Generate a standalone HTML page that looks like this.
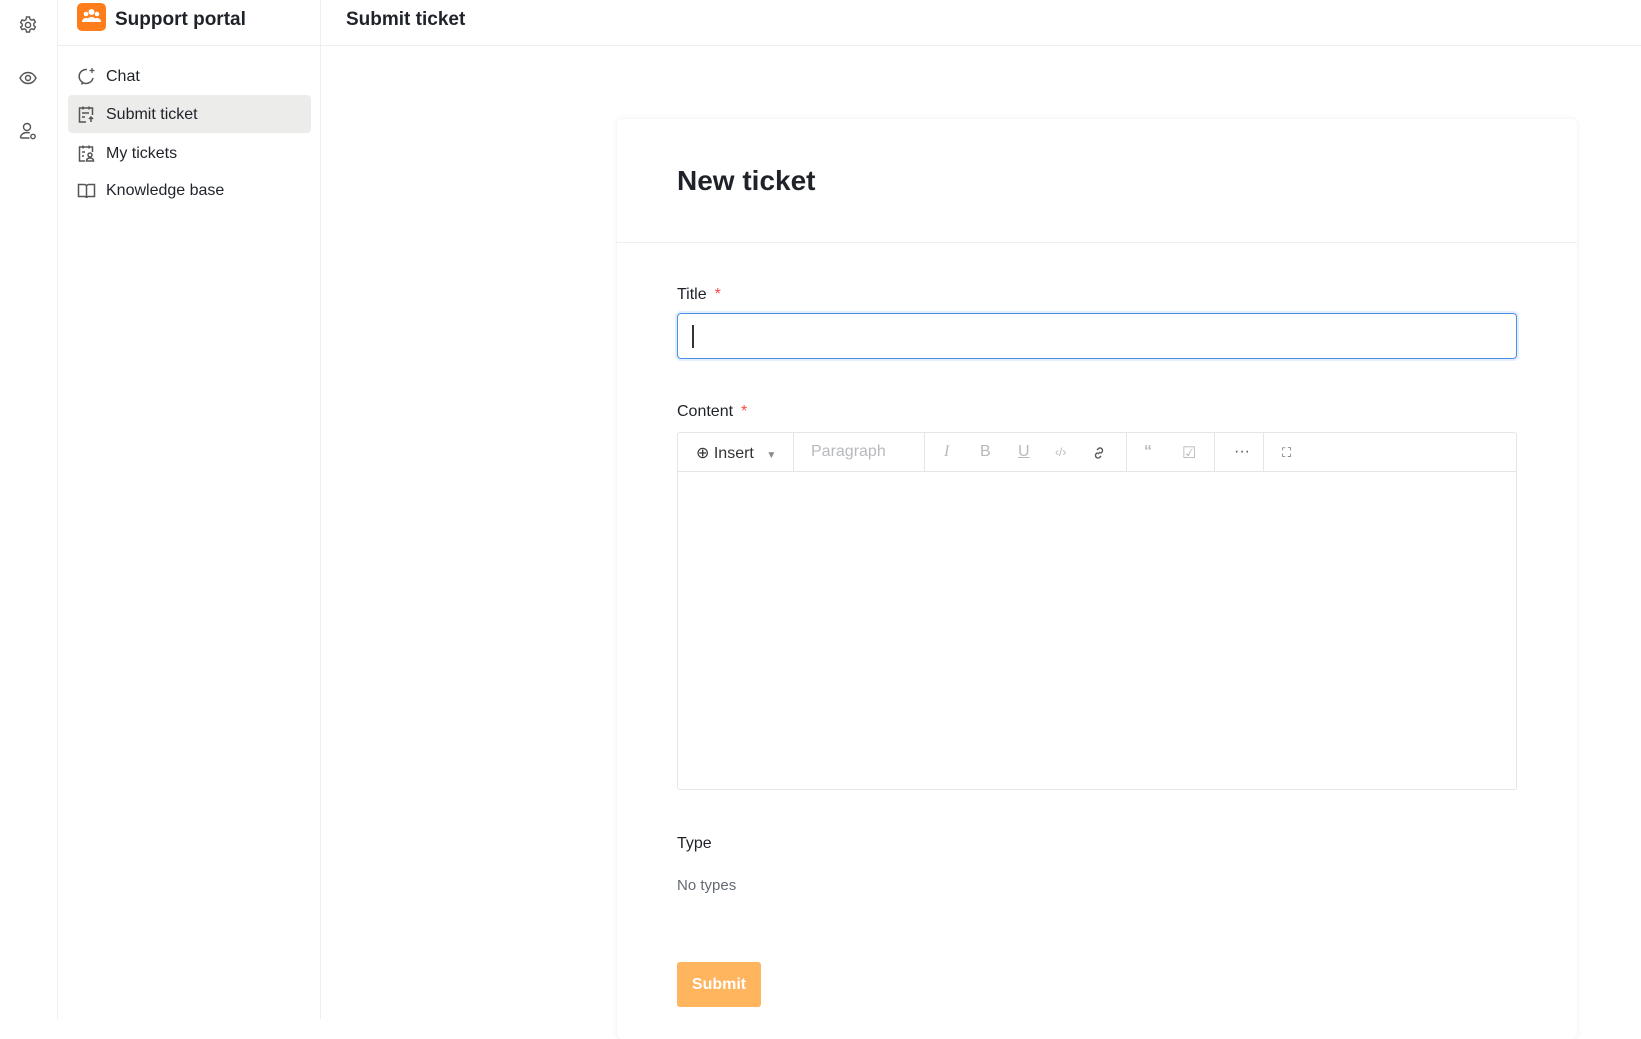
<!DOCTYPE html>
<html><head><meta charset="utf-8"><style>
*{box-sizing:border-box;margin:0;padding:0}
body{width:1641px;height:1019px;overflow:hidden;background:#fff;font-family:"Liberation Sans",sans-serif;color:#1f2329;position:relative}
.rail{position:absolute;left:0;top:0;width:58px;height:1019px;border-right:1px solid #eceef0;background:#fff}
.rail svg{position:absolute;left:18px}
.side{position:absolute;left:58px;top:0;width:263px;height:1019px;border-right:1px solid #eceef0}
.top{position:absolute;left:58px;top:0;right:0;height:46px;border-bottom:1px solid #eceef0}
.logo{position:absolute;left:77px;top:3px;width:29px;height:28px;background:#ff7d1a;border-radius:5px}
.brand{position:absolute;left:115px;top:9px;font-size:19px;font-weight:bold;color:#1f2329}
.ptitle{position:absolute;left:346px;top:9px;font-size:19px;font-weight:bold}
.nav{position:absolute;left:68px;width:243px;height:38px;border-radius:4px;font-size:16px;line-height:40px;padding-left:38px;color:#1f2329}
.nav svg{position:absolute;left:9px;top:10px}
.nav.act{background:#ececea}
.card{position:absolute;left:617px;top:119px;width:960px;height:920px;background:#fff;border-radius:6px;box-shadow:0 0 6px rgba(0,0,0,.08)}
.h{position:absolute;left:60px;top:46px;font-size:28px;font-weight:bold;color:#1f2329}
.div{position:absolute;left:0;right:0;top:123px;border-top:1px solid #eceef0}
.lbl{position:absolute;left:60px;font-size:16px;color:#1f2329}
.lbl b{color:#f54a45;font-weight:normal;margin-left:8px}
.inp{position:absolute;left:60px;top:194px;width:840px;height:46px;border:1.5px solid #4a90e2;border-radius:4px;box-shadow:0 0 0 2px rgba(74,144,226,.15)}
.inp i{position:absolute;left:14px;top:11px;width:2px;height:23px;background:#333}
.ed{position:absolute;left:60px;top:313px;width:840px;height:358px;border:1px solid #e3e5e8;border-radius:3px}
.tb{height:39px;border-bottom:1px solid #e3e5e8;position:relative;font-size:16px;color:#b7b9bd}
.tb span{position:absolute;top:10px}
.sep{position:absolute;top:0;height:38px;border-left:1px solid #e3e5e8}
.btn{position:absolute;left:60px;top:843px;width:84px;height:45px;background:#ffb45e;border-radius:3px;color:#fff;font-weight:bold;font-size:16px;text-align:center;line-height:45px}
</style></head><body>
<div class="rail">
<svg style="top:15px" width="20" height="20" viewBox="0 0 20 20" fill="none" stroke="#555" stroke-width="1.4"><path d="M8.5 2h3l.5 2.2 1.8 1 2.1-.8 1.5 2.6-1.6 1.5v2l1.6 1.5-1.5 2.6-2.1-.8-1.8 1-.5 2.2h-3l-.5-2.2-1.8-1-2.1.8-1.5-2.6L4.2 11V9L2.6 7.5l1.5-2.6 2.1.8 1.8-1z"/><circle cx="10" cy="10" r="2.6"/></svg>
<svg style="top:68px" width="20" height="20" viewBox="0 0 20 20" fill="none" stroke="#555" stroke-width="1.4"><path d="M2 10c2-4 5-5.5 8-5.5s6 1.5 8 5.5c-2 4-5 5.5-8 5.5S4 14 2 10z"/><circle cx="10" cy="10" r="2.5"/></svg>
<svg style="top:121px" width="20" height="20" viewBox="0 0 20 20" fill="none" stroke="#555" stroke-width="1.4"><circle cx="9" cy="6" r="3.5"/><path d="M2.5 17c0-3.5 3-5.5 6.5-5.5 1 0 2 .2 2.8.5M2.5 17h9"/><circle cx="15" cy="15.5" r="2.2"/></svg>
</div>
<div class="side"></div>
<div class="top"></div>
<div class="logo"><svg width="29" height="28" viewBox="0 0 29 28"><circle cx="14.5" cy="9" r="3" fill="#fff"/><circle cx="9" cy="11" r="2.3" fill="#fff"/><circle cx="20" cy="11" r="2.3" fill="#fff"/><path d="M9.5 19c0-3 2.2-5 5-5s5 2 5 5z" fill="#fff"/><path d="M5 19c0-2.5 1.7-4 4-4 1 0 1.7.3 2 .6-1 .9-1.5 2-1.5 3.4z" fill="#fff"/><path d="M24 19c0-2.5-1.7-4-4-4-1 0-1.7.3-2 .6 1 .9 1.5 2 1.5 3.4z" fill="#fff"/></svg></div>
<div class="brand">Support portal</div>
<div class="ptitle">Submit ticket</div>
<div class="nav" style="top:57px"><svg width="19" height="19" viewBox="0 0 19 19" fill="none" stroke="#555" stroke-width="1.5"><path d="M10 2.5A7 7 0 1 0 16 11M6 15.5l-1.5 2"/><path d="M15 1v5M12.5 3.5h5" stroke-width="1.3"/></svg>Chat</div>
<div class="nav act" style="top:95px"><svg width="19" height="19" viewBox="0 0 19 19" fill="none" stroke="#555" stroke-width="1.5"><path d="M9 17H2.5V3h13v7M6 1.5v3M12 1.5v3M5 8h7M5 12h3M14 17v-5M12 14l2-2 2 2"/></svg>Submit ticket</div>
<div class="nav" style="top:134px"><svg width="19" height="19" viewBox="0 0 19 19" fill="none" stroke="#555" stroke-width="1.5"><path d="M8 17H2.5V3h13v5M6 1.5v3M12 1.5v3M5 8h3M5 12h2"/><circle cx="13" cy="11" r="2"/><path d="M9.5 17c0-2 1.5-3 3.5-3s3.5 1 3.5 3z"/></svg>My tickets</div>
<div class="nav" style="top:171px"><svg width="19" height="19" viewBox="0 0 19 19" fill="none" stroke="#555" stroke-width="1.5"><path d="M1.5 3.5h6c1 0 2 1 2 2V17c0-1-1-1.5-2-1.5h-6zM17.5 3.5h-6c-1 0-2 1-2 2V17c0-1 1-1.5 2-1.5h6z"/></svg>Knowledge base</div>
<div class="card">
<div class="h">New ticket</div>
<div class="div"></div>
<div class="lbl" style="top:167px">Title<b>*</b></div>
<div class="inp"><i></i></div>
<div class="lbl" style="top:284px">Content<b>*</b></div>
<div class="ed"><div class="tb">
<span style="left:18px;color:#333">⊕ Insert <small style="font-size:10px;color:#888;margin-left:8px">▼</small></span>
<div class="sep" style="left:115px"></div>
<span style="left:133px">Paragraph</span>
<div class="sep" style="left:246px"></div>
<span style="left:266px;font-style:italic;font-family:'Liberation Serif'">I</span>
<span style="left:302px">B</span>
<span style="left:340px;text-decoration:underline">U</span>
<span style="left:377px;font-size:12px;top:12px">‹/›</span>
<svg style="position:absolute;left:413px;top:12px" width="16" height="16" viewBox="0 0 16 16" fill="none" stroke="#555" stroke-width="1.4"><path d="M7 9l2-2M6 5l1.5-1.5a2.5 2.5 0 0 1 3.5 3.5L9.5 8.5M10 11l-1.5 1.5a2.5 2.5 0 0 1-3.5-3.5L6.5 7.5"/></svg>
<div class="sep" style="left:448px"></div>
<span style="left:466px;font-weight:bold">“</span>
<span style="left:504px">☑</span>
<div class="sep" style="left:536px"></div>
<span style="left:556px;color:#555">···</span>
<div class="sep" style="left:585px"></div>
<span style="left:604px;font-size:13px;top:12px;color:#666">⛶</span>
</div></div>
<div class="lbl" style="top:716px">Type</div>
<div class="lbl" style="top:758px;font-size:15px;color:#646a73">No types</div>
<div class="btn">Submit</div>
</div>
</body></html>
